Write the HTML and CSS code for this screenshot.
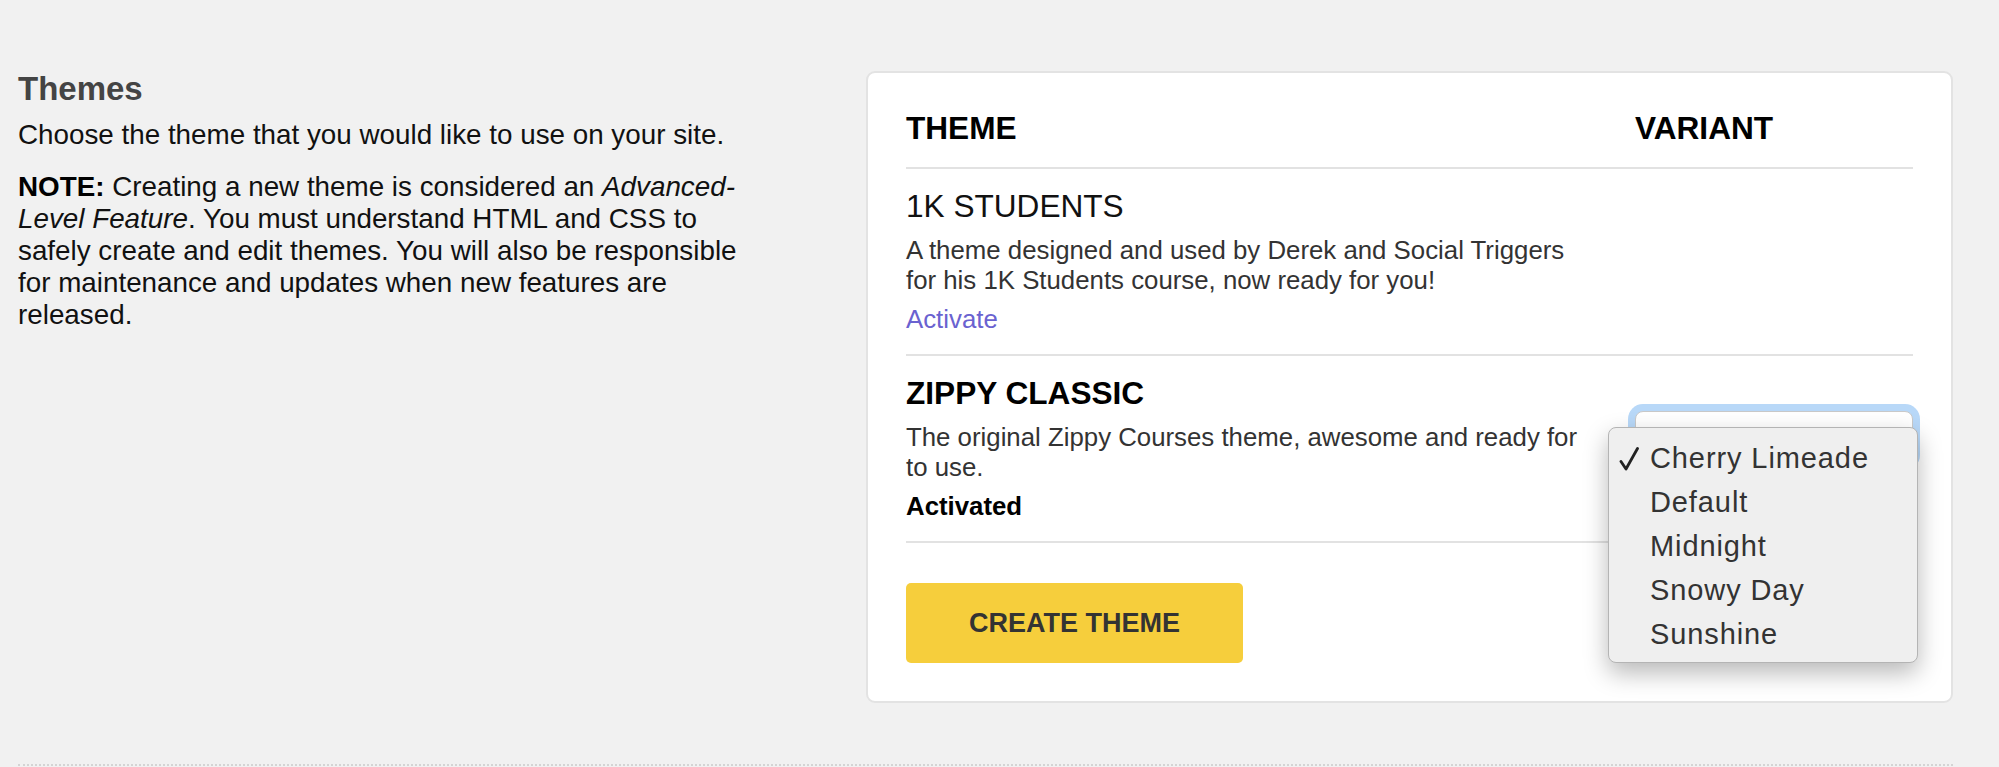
FILE: index.html
```html
<!DOCTYPE html>
<html lang="en">
<head>
<meta charset="utf-8">
<title>Themes</title>
<link rel="stylesheet" href="styles.css">
</head>
<body>
<div class="page">
  <section class="settings-row">
    <div class="intro">
      <h2 class="intro-title">Themes</h2>
      <p class="intro-text">Choose the theme that you would like to use on your site.</p>
      <p class="intro-text intro-note"><strong>NOTE:</strong> Creating a new theme is considered an <em>Advanced-Level Feature</em>. You must understand HTML and CSS to safely create and edit themes. You will also be responsible for maintenance and updates when new features are released.</p>
    </div>

    <div class="card">
      <div class="theme-table">
        <div class="theme-row theme-head">
          <div class="col-theme">THEME</div>
          <div class="col-variant">VARIANT</div>
        </div>

        <div class="theme-row">
          <div class="col-theme">
            <div class="theme-name">1K STUDENTS</div>
            <div class="theme-desc">A theme designed and used by Derek and Social Triggers for his 1K Students course, now ready for you!</div>
            <a class="theme-action link" href="#">Activate</a>
          </div>
          <div class="col-variant"></div>
        </div>

        <div class="theme-row">
          <div class="col-theme">
            <div class="theme-name active">ZIPPY CLASSIC</div>
            <div class="theme-desc">The original Zippy Courses theme, awesome and ready for to use.</div>
            <div class="theme-action activated">Activated</div>
          </div>
          <div class="col-variant">
            <div class="select">
              <ul class="menu">
                <li class="menu-item"><span class="check"><svg class="check-icon" viewBox="0 0 20 24" width="20" height="24"><path d="M2 14.5 L7 22 L18.5 1.5" fill="none" stroke="#222" stroke-width="2.8" stroke-linecap="round" stroke-linejoin="round"/></svg></span>Cherry Limeade</li>
                <li class="menu-item"><span class="check"></span>Default</li>
                <li class="menu-item"><span class="check"></span>Midnight</li>
                <li class="menu-item"><span class="check"></span>Snowy Day</li>
                <li class="menu-item"><span class="check"></span>Sunshine</li>
              </ul>
            </div>
          </div>
        </div>
      </div>

      <button class="btn-create" type="button">CREATE THEME</button>
    </div>
  </section>
</div>
</body>
</html>
```

FILE: styles.css
```css
html, body {
  margin: 0;
  padding: 0;
}

body {
  background: #f1f1f1;
  font-family: "Liberation Sans", Arial, Helvetica, sans-serif;
  color: #111;
}

.page {
  width: 1999px;
  height: 767px;
  overflow: hidden;
}

.settings-row {
  display: flex;
  margin: 0 46px 0 18px;
  padding: 71px 0 61px 0;
  border-bottom: 2px dotted #d4d4d4;
}

.intro {
  flex: 0 0 848px;
}

.intro-title {
  margin: 0;
  font-size: 33px;
  line-height: 36px;
  font-weight: bold;
  color: #444;
}

.intro-text {
  margin: 12px 0 0 0;
  max-width: 740px;
  font-size: 27.8px;
  line-height: 32px;
  color: #111;
}

.intro-note {
  margin-top: 20px;
}

.intro-note strong {
  color: #000;
}

.card {
  flex: 1;
  background: #fff;
  border: 2px solid #e3e3e3;
  border-radius: 9px;
  padding: 37px 38px 38px 38px;
}

.theme-row {
  display: grid;
  grid-template-columns: 686px 1fr;
  column-gap: 43px;
  padding: 19px 0 20px 0;
  border-bottom: 2px solid #e2e2e2;
}

.theme-head {
  padding: 0 0 21px 0;
  font-size: 31.6px;
  line-height: 36px;
  font-weight: bold;
  color: #000;
}

.theme-name {
  font-size: 31.6px;
  line-height: 36px;
  color: #111;
}

.theme-name.active {
  font-weight: bold;
  color: #000;
}

.theme-desc {
  margin-top: 10.5px;
  font-size: 25.8px;
  line-height: 30px;
  color: #333;
}

.theme-action {
  display: block;
  margin-top: 9.5px;
  font-size: 25.8px;
  line-height: 30px;
}

.link {
  color: #6a62d0;
  text-decoration: none;
}

.activated {
  font-weight: bold;
  color: #000;
}

.col-variant {
  position: relative;
}

.select {
  position: relative;
  margin-top: 35.5px;
  height: 50px;
  background: #fff;
  border: 1px solid #c9c9c9;
  border-radius: 8px;
  box-shadow: 0 0 0 7px #b8d8f8;
}

.menu {
  position: absolute;
  left: -28px;
  top: 15.5px;
  width: 308px;
  margin: 0;
  padding: 7.5px 0 6.5px 0;
  list-style: none;
  background: #efefef;
  border: 1px solid #b4b4b4;
  border-radius: 8px;
  box-shadow: 0 10px 24px rgba(0, 0, 0, 0.28);
  z-index: 5;
}

.menu-item {
  display: flex;
  align-items: center;
  height: 44px;
  padding-left: 10px;
  font-size: 29px;
  line-height: 44px;
  letter-spacing: 0.9px;
  color: #333;
  white-space: nowrap;
}

.check {
  flex: 0 0 31px;
  display: flex;
  align-items: center;
  height: 44px;
  padding-top: 2px;
  box-sizing: border-box;
}

.check-icon {
  display: block;
}

.btn-create {
  display: block;
  margin-top: 40px;
  width: 337px;
  height: 80px;
  padding: 0;
  border: none;
  border-radius: 5px;
  background: #f6ce3c;
  color: #333;
  font-family: "Liberation Sans", Arial, Helvetica, sans-serif;
  font-size: 27px;
  font-weight: bold;
  cursor: pointer;
}
```
